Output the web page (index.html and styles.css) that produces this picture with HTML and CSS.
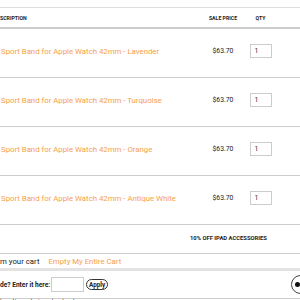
FILE: index.html
```html
<!DOCTYPE html>
<html>
<head>
<meta charset="utf-8">
<link rel="stylesheet" href="styles.css">
</head>
<body>
<div class="page">
  <div class="cart">
    <div class="head">
      <div class="h-desc">SCRIPTION</div>
      <div class="h-price">SALE PRICE</div>
      <div class="h-qty">QTY</div>
    </div>
    <div class="row">
      <a class="name">Sport Band for Apple Watch 42mm - Lavender</a>
      <div class="price">$63.70</div>
      <div class="qty"><input class="qty-in" value="1"></div>
    </div>
    <div class="row">
      <a class="name">Sport Band for Apple Watch 42mm - Turquoise</a>
      <div class="price">$63.70</div>
      <div class="qty"><input class="qty-in" value="1"></div>
    </div>
    <div class="row">
      <a class="name">Sport Band for Apple Watch 42mm - Orange</a>
      <div class="price">$63.70</div>
      <div class="qty"><input class="qty-in" value="1"></div>
    </div>
    <div class="row">
      <a class="name">Sport Band for Apple Watch 42mm - Antique White</a>
      <div class="price">$63.70</div>
      <div class="qty"><input class="qty-in" value="1"></div>
    </div>
    <div class="promo">
      <div class="promo-text">10% OFF IPAD ACCESSORIES</div>
    </div>
  </div>
  <div class="actions">
    <span class="remove">m your cart</span>
    <a class="empty">Empty My Entire Cart</a>
  </div>
  <div class="coupon">
    <span class="coupon-label">de? Enter it here:</span>
    <input class="coupon-in">
    <button class="apply">Apply</button>
    <span class="spacer"></span>
    <span class="round"><span class="dot"></span></span>
  </div>
  <div class="note">h options during checkout</div>
</div>
</body>
</html>
```
FILE: styles.css
```css
html, body {
  margin: 0;
  padding: 0;
  background: #fff;
  overflow: hidden;
}
body {
  font-family: Roboto, "Liberation Sans", sans-serif;
  font-size: 7.8px;
  color: #222;
  width: 300px;
  height: 300px;
}
.page {
  width: 300px;
}
.cart {
  margin-top: 7px;
  border-top: 1px solid #ddd;
}
.head {
  display: grid;
  grid-template-columns: 203px 40px 35px 1fr;
  height: 18px;
  align-items: center;
  border-bottom: 2px solid #ccc;
  font-weight: bold;
  font-size: 5.2px;
  padding-top: 1px;
}
.h-desc { padding-left: 0; }
.h-price, .h-qty { text-align: center; }
.row {
  display: grid;
  grid-template-columns: 203px 40px 35px 1fr;
  height: 48px;
  align-items: center;
  border-bottom: 1px solid #ccc;
}
.name {
  color: #f7a04a;
  padding-left: 1px;
  margin-top: -4px;
}
.price {
  text-align: center;
  font-size: 6.8px;
  margin-top: -4px;
}
.qty {
  display: flex;
  justify-content: center;
  margin-top: -4px;
}
.qty-in {
  width: 22px;
  height: 14px;
  box-sizing: border-box;
  border: 1px solid #ccc;
  font: inherit;
  font-size: 6.8px;
  padding: 0 0 0 4px;
  color: #333;
}
.promo {
  display: grid;
  grid-template-columns: 190px 1fr;
  height: 28px;
  align-items: center;
  border-bottom: 1px solid #ccc;
}
.promo-text {
  grid-column: 2;
  font-weight: bold;
  font-size: 5.85px;
  margin-top: -2px;
}
.actions {
  display: flex;
  align-items: center;
  gap: 9px;
  height: 14px;
  border-bottom: 3px solid #e3e3e3;
}
.empty { color: #f7a04a; }
.coupon {
  display: flex;
  align-items: center;
  height: 27px;
  border-bottom: 1px solid #ccc;
  font-weight: bold;
  font-size: 6.6px;
}
.coupon-in {
  width: 33px;
  height: 15px;
  box-sizing: border-box;
  border: 1px solid #ccc;
  margin-left: 1px;
  padding: 0;
}
.apply {
  margin-left: 2px;
  height: 11px;
  padding: 0 2px;
  border: 1px solid #333;
  border-radius: 6px;
  background: #fff;
  font: inherit;
  font-weight: bold;
  font-size: 6.3px;
  color: #222;
}
.spacer { flex: 1; }
.round {
  width: 19px;
  height: 19px;
  flex: none;
  box-sizing: border-box;
  border: 1px solid #444;
  border-radius: 50%;
  display: flex;
  align-items: center;
  padding-left: 3px;
  margin-right: -10px;
}
.dot {
  width: 5px;
  height: 5px;
  border-radius: 50%;
  background: #111;
}
.note {
  font-size: 6.5px;
  line-height: 7px;
  padding-top: 0;
}
```
